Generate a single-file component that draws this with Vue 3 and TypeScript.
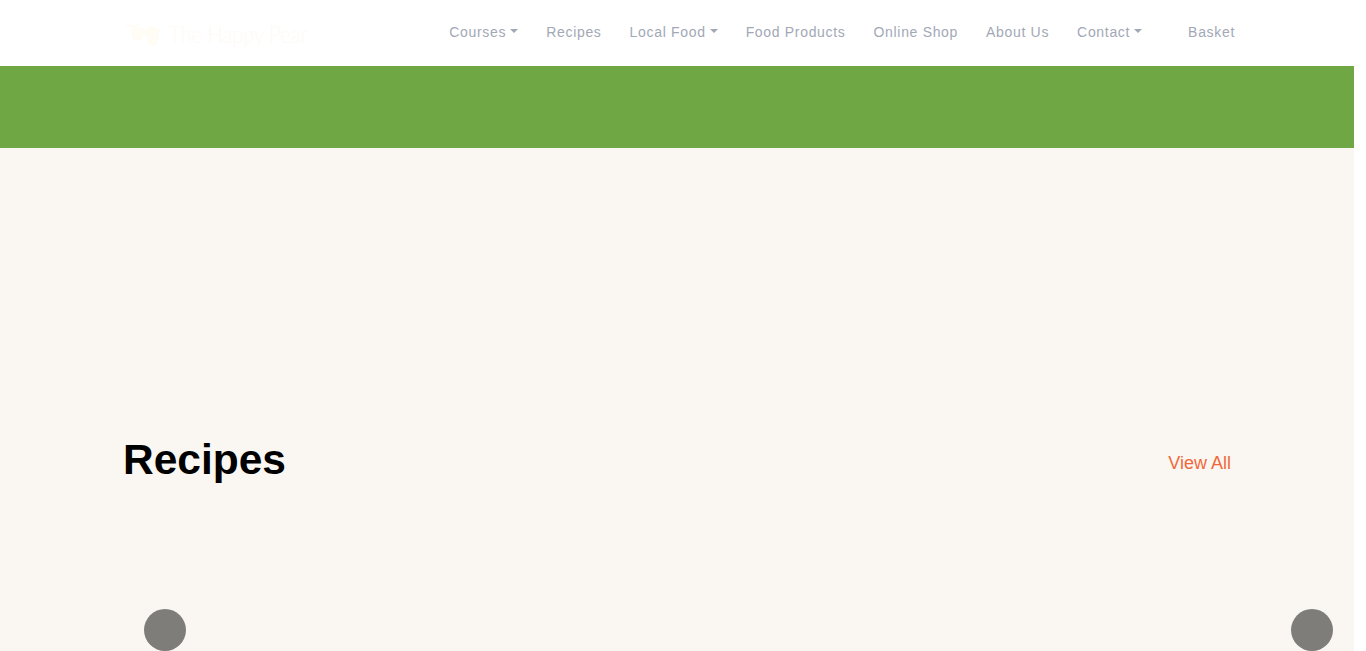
<script setup lang="ts">
interface NavItem { label: string; caret: boolean }
const items: NavItem[] = [
  { label: 'Courses', caret: true },
  { label: 'Recipes', caret: false },
  { label: 'Local Food', caret: true },
  { label: 'Food Products', caret: false },
  { label: 'Online Shop', caret: false },
  { label: 'About Us', caret: false },
  { label: 'Contact', caret: true },
]
</script>

<template>
  <div class="viewport">
    <div class="page">
      <header class="topbar">
        <div class="container bar-inner">
          <a class="brand">
            <svg class="pear" width="36" height="30" viewBox="0 0 36 30" fill="none" stroke="#fffdf3" stroke-width="2">
              <path d="M1 6 L10 8 L14 3" />
              <path d="M9 9 C6 14 8 21 13 21 C17 21 17 16 19 15 C21 14 24 16 24 21 C24 27 29 28 32 22 C34 18 32 12 29 9" fill="#fffdf5" />
              <path d="M24 8 L35 12" />
            </svg>
            <span class="brand-name">The Happy Pear</span>
          </a>
          <nav class="nav">
            <a v-for="item in items" :key="item.label" class="nav-link">
              {{ item.label }}<span v-if="item.caret" class="caret"></span>
            </a>
            <a class="nav-link basket">Basket</a>
          </nav>
        </div>
      </header>
      <div class="band"></div>
      <main class="content">
        <div class="container recipes-head">
          <h2 class="title">Recipes</h2>
          <a class="view-all">View All</a>
        </div>
        <button class="arrow arrow-left" aria-label="Previous"></button>
        <button class="arrow arrow-right" aria-label="Next"></button>
      </main>
    </div>
  </div>
</template>

<style>
html, body { margin: 0; background: #fff; overflow: hidden; }
</style>

<style scoped>
.viewport {
  height: 651px;
  overflow: hidden;
  padding-right: 12px;
  background: #fff;
  font-family: "Liberation Sans", Arial, sans-serif;
}
.page { display: flex; flex-direction: column; height: 100%; }
.container { width: 1110px; margin: 0 auto; }
.topbar { height: 66px; background: #fff; }
.bar-inner { display: flex; align-items: flex-start; justify-content: space-between; }
.brand { display: flex; align-items: center; height: 66px; }
.pear { margin-left: 3px; margin-top: 2px; }
.brand-name {
  margin-left: 8px;
  font-family: Lato, sans-serif;
  font-size: 24px;
  font-weight: 300;
  color: #fefaf6;
  white-space: nowrap;
  transform: scaleX(0.84);
  transform-origin: left center;
}
.nav { display: flex; margin-right: -3px; padding-top: 15px; }
.nav-link {
  display: flex;
  align-items: center;
  height: 34px;
  margin-left: 28px;
  font-size: 14px;
  letter-spacing: 0.68px;
  color: #a2a8b6;
  white-space: nowrap;
}
.basket { margin-left: 46px; }
.caret {
  width: 0;
  height: 0;
  margin-left: 4px;
  margin-bottom: 3px;
  border-top: 4px solid currentColor;
  border-left: 4px solid transparent;
  border-right: 4px solid transparent;
}
.band { height: 82px; background: #6ea743; flex: none; }
.content { position: relative; flex: 1; background: #faf7f2; padding-top: 280px; }
.recipes-head { display: flex; align-items: center; justify-content: space-between; height: 64px; }
.title { margin: 0 0 0 1px; font-size: 42.5px; font-weight: 700; line-height: 64px; color: #000; }
.view-all { margin-top: 6px; margin-right: 1px; font-size: 18px; color: #f2673a; }
.arrow {
  position: absolute;
  top: 461px;
  width: 42px;
  height: 42px;
  padding: 0;
  border: 0;
  border-radius: 50%;
  background: #7f7d7a;
}
.arrow-left { left: 144px; }
.arrow-right { left: 1291px; }
</style>
